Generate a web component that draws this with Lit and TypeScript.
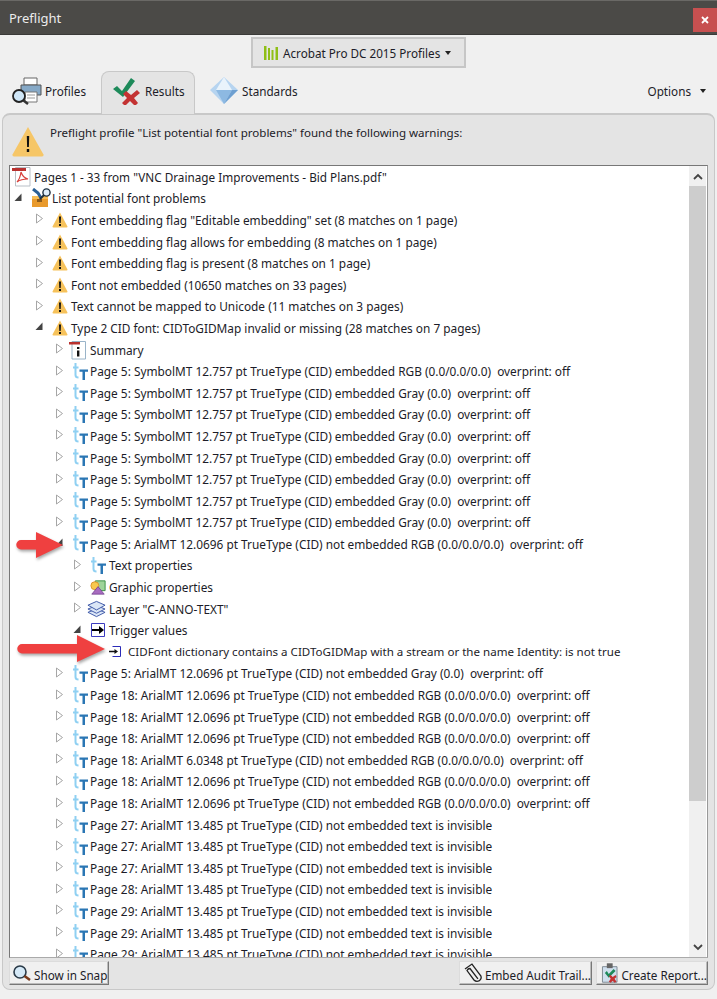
import { LitElement, html, css, svg } from "lit";
import { customElement } from "lit/decorators.js";

const tIcon = svg`<svg class="ic" width="16" height="17" viewBox="0 0 16 17"><path d="M3.500 0v12q0 2.500 3 2.500M1 4.500h5.500" fill="none" stroke="#8fd0f2" stroke-width="2"/><path d="M7.500 6.500h8.500v2.200h-3v8.300h-2.500V8.700h-3z" fill="#2a76b4"/></svg>`;
const warnSmall = svg`<svg class="ic" width="16" height="16" viewBox="0 0 16 16"><path d="M8 .5 15.500 14.600Q15.600 15.500 14.600 15.500H1.400Q.4 15.500.5 14.600Z" fill="#f6c25b"/><path d="M7 4.500h2l-.3 6.500H7.300zM7 12h2v2H7z" fill="#111"/></svg>`;
const pdfIcon = svg`<svg class="ic" width="20" height="21" viewBox="0 0 20 21"><path d="M3.500 1.500h14.500v18.500H3.500z" fill="#fff" stroke="#b9bfc6"/><path d="M0 2h14v3H0z" fill="#b8312f"/><path d="M12 4v1M9 6q-1 7-4 10q4-3 11-3q-5-1-7-7z" fill="none" stroke="#d8413c" stroke-width="1.200"/></svg>`;
const boxIcon = svg`<svg class="ic" width="20" height="20" viewBox="0 0 20 20"><path d="M1 8h16v11H1z" fill="#e99a2c"/><path d="M1 8h16v3H1z" fill="#f6bd55"/><path d="M6 11h5v3H6z" fill="#8a5a1a"/><path d="M2 1l5 4 3 5" fill="none" stroke="#2a5f95" stroke-width="3"/><circle cx="15.500" cy="4.500" r="3.600" fill="#dfeefa" stroke="#1e3040" stroke-width="1.400"/><path d="M13 7 9 11" stroke="#1e3040" stroke-width="2"/></svg>`;
const summaryIcon = svg`<svg class="ic shift" width="18" height="20" viewBox="0 0 18 20"><path d="M3 1.500h13.500v17.500H3z" fill="#fff" stroke="#9ab4c9"/><path d="M0 2h11v2.500H0z" fill="#b8312f"/><path d="M8 7h2.400v2H8zM8 10.500h2.400v6H8z" fill="#111"/></svg>`;
const graphicIcon = svg`<svg class="ic" width="16" height="17" viewBox="0 0 18 18"><path d="M6 1.500h11v11H6z" fill="#9fd49a" stroke="#2f8a3c"/><circle cx="5.500" cy="7" r="4.500" fill="#f7c94e" stroke="#d9902a"/><path d="M9 8 16 16.500H2z" fill="#a86cc0" stroke="#6d3a8a" stroke-width=".8"/></svg>`;
const layerIcon = svg`<svg class="ic shift" width="19" height="18" viewBox="0 0 20 18"><g fill="#dbe6f6" stroke="#3d57a6"><path d="M10 9 19 12.500 10 17 1 12.500Z"/><path d="M10 5.500 19 9 10 13.500 1 9Z"/><path d="M10 1 19 5 10 10 1 5Z"/></g></svg>`;
const triggerIcon = svg`<svg class="ic" width="16" height="16" viewBox="0 0 16 16"><path d="M1.500 1.500h13v13h-13z" fill="#fff" stroke="#3b3bc0"/><path d="M2 7h7V4l5 4-5 4V9H2z" fill="#000"/></svg>`;
const triggerSmall = svg`<svg class="ic" width="13" height="13" viewBox="0 0 13 13"><path d="M3.500 1.500h8v10h-8" fill="#fff" stroke="#2b2bb8"/><path d="M0 5.800h5.500V4l3.500 2.500L5.500 9V7.200H0z" fill="#111"/></svg>`;

type Row = { l: number; a?: "o" | "c"; i?: any; t: string };
const sym = (s: string): Row => ({ l: 3, a: "c", i: tIcon, t: `Page 5: SymbolMT 12.757 pt TrueType (CID) embedded ${s}  overprint: off` });
const ar = (p: number, s: string, c: string): Row => ({ l: 3, a: "c", i: tIcon, t: `Page ${p}: ArialMT ${s} pt TrueType (CID) not embedded ${c}` });
const RGB = "RGB (0.0/0.0/0.0)  overprint: off";
const rows: Row[] = [
  { l: 0, i: pdfIcon, t: 'Pages 1 - 33 from "VNC Drainage Improvements - Bid Plans.pdf"' },
  { l: 1, a: "o", i: boxIcon, t: "List potential font problems" },
  { l: 2, a: "c", i: warnSmall, t: 'Font embedding flag "Editable embedding" set (8 matches on 1 page)' },
  { l: 2, a: "c", i: warnSmall, t: "Font embedding flag allows for embedding (8 matches on 1 page)" },
  { l: 2, a: "c", i: warnSmall, t: "Font embedding flag is present (8 matches on 1 page)" },
  { l: 2, a: "c", i: warnSmall, t: "Font not embedded (10650 matches on 33 pages)" },
  { l: 2, a: "c", i: warnSmall, t: "Text cannot be mapped to Unicode (11 matches on 3 pages)" },
  { l: 2, a: "o", i: warnSmall, t: "Type 2 CID font: CIDToGIDMap invalid or missing (28 matches on 7 pages)" },
  { l: 3, a: "c", i: summaryIcon, t: "Summary" },
  sym("RGB (0.0/0.0/0.0)"),
  ...Array.from({ length: 7 }, () => sym("Gray (0.0)")),
  { ...ar(5, "12.0696", RGB), a: "o" },
  { l: 4, a: "c", i: tIcon, t: "Text properties" },
  { l: 4, a: "c", i: graphicIcon, t: "Graphic properties" },
  { l: 4, a: "c", i: layerIcon, t: 'Layer "C-ANNO-TEXT"' },
  { l: 4, a: "o", i: triggerIcon, t: "Trigger values" },
  { l: 5, i: triggerSmall, t: "CIDFont dictionary contains a CIDToGIDMap with a stream or the name Identity: is not true" },
  ar(5, "12.0696", "Gray (0.0)  overprint: off"),
  ar(18, "12.0696", RGB),
  ar(18, "12.0696", RGB),
  ar(18, "12.0696", RGB),
  ar(18, "6.0348", RGB),
  ar(18, "12.0696", RGB),
  ar(18, "12.0696", RGB),
  ...[27, 27, 27, 28, 29, 29, 29].map((p) => ar(p, "13.485", "text is invisible")),
];

const XS = [12, 31, 52, 72, 90, 109];
const WS = [20, 19, 17, 16, 17, 17];

@customElement("app-root")
export class AppRoot extends LitElement {
  static styles = css`
    :host { display: block; width: 717px; height: 999px; overflow: hidden; background: #f0f0f0; color: #1c1c28;
      font: 11.700px/16px "Noto Sans", "Open Sans", sans-serif; position: relative; }
    .title { height: 35px; box-sizing: border-box; background: #4b4a47; border-top: 1px solid #6a6966; border-bottom: 1px solid #3a3a38;
      display: flex; align-items: center; justify-content: space-between; color: #ececec; font-size: 13px; padding-left: 9px; }
    .close { width: 24px; height: 24px; margin-top: 4px; background: #c75050; display: flex; align-items: center; justify-content: center; }
    .top { height: 36px; display: flex; justify-content: center; align-items: flex-start; padding-top: 2px; box-sizing: border-box; }
    .profile { width: 215px; height: 31px; box-sizing: border-box; background: #e4e4e4; border: 2px solid #c6c6c6; padding-left: 11px;
      display: flex; align-items: center; gap: 4px; }
    .profile .caret { margin-left: 1px; }
    .caret { width: 0; height: 0; border: 3.500px solid transparent; border-top: 4px solid #222; border-bottom: 0; display: inline-block; }
    .tabs { height: 42px; display: flex; align-items: flex-start; padding-left: 11px; box-sizing: border-box; position: relative; z-index: 1; }
    .tab { display: flex; align-items: center; height: 43px; box-sizing: border-box; gap: 3px; padding-bottom: 4px; }
    .tab.profiles { width: 90px; }
    .tab.results { width: 94px; padding-left: 10px; background: #e4e4e4; border: 1px solid #c8c8c8; border-bottom: 0; border-radius: 8px 8px 0 0; }
    .tab.standards { margin-left: 15px; }
    .options { margin-left: auto; margin-right: 11px; height: 39px; display: flex; align-items: center; gap: 9px; }
    .panel { margin: 0 2px; height: 877px; box-sizing: border-box; background: #e4e4e4; border: 1px solid #c8c8c8; border-top-width: 2px; border-radius: 8px;
      padding: 0 6px; display: flex; flex-direction: column; }
    .msg { height: 50px; display: flex; align-items: flex-start; gap: 6px; padding-left: 3px; flex: none; }
    .msg svg { margin-top: 11px; }
    .msg span { margin-top: 10px; font-size: 11.550px; }
    .tree { height: 793px; flex: none; box-sizing: border-box; background: #fff; border: 1px solid #777; border-right-color: #999; border-bottom-color: #aaa; display: flex; overflow: hidden; }
    .list { flex: 1; min-width: 0; overflow: hidden; font-size: 11.850px; }
    .row { height: 21.600px; display: flex; align-items: center; white-space: pre; position: relative; }
    .row.l0 { font-size: 11.750px; }
    .row.l5 { font-size: 11.570px; }
    .arrow { width: 0; flex: none; position: relative; height: 10px; margin-top: -3px; }
    .arrow svg { position: absolute; top: 0; left: -17px; }
    .ic { flex: none; display: block; }
    .ic.shift { margin-left: -3px; }
    .slot { display: flex; align-items: center; flex: none; margin-right: 2px; }
    .bar { width: 17px; flex: none; margin-right: 1px; background: #f0f0f0; display: flex; flex-direction: column; }
    .bar .btn { height: 20px; display: flex; align-items: center; justify-content: center; flex: none; }
    .thumb { height: 615px; background: #cdcdcd; flex: none; }
    .grow { flex: 1; }
    .foot { height: 28px; flex: none; display: flex; align-items: flex-start; padding-top: 3px; gap: 4px; box-sizing: border-box; white-space: nowrap; }
    .fbtn { height: 24px; box-sizing: border-box; display: flex; align-items: center; gap: 2px; background: #f0f0f0; padding-left: 2px; overflow: hidden;
      border: 1px solid; border-color: #dcdcdc #777 #777 #dcdcdc; box-shadow: inset -1px -1px 0 #bbb; }
    .fbtn span { padding-top: 4px; }
    .fbtn.snap { width: 100px; }
    .fbtn.embed { width: 133px; padding-left: 3px; }
    .fbtn.report { width: 112px; padding-left: 4px; }
    .foot .sp { flex: 1; }
    .arrows { position: absolute; inset: 0; pointer-events: none; }
  `;

  row(r: Row) {
    return html`<div class="row l${r.l}" style="padding-left:${XS[r.l] - 10}px">
      ${r.a
        ? html`<span class="arrow"><svg width="9" height="11" viewBox="0 0 9 11">${r.a === "c"
            ? svg`<path d="M1.500 1 7.500 5.500 1.500 10Z" fill="#fff" stroke="#a6a6a6"/>`
            : svg`<path d="M7.500 1.500V9H.5Z" fill="#444"/>`}</svg></span>`
        : ""}
      <span class="slot" style="width:${WS[r.l]}px">${r.i}</span><span>${r.t}</span>
    </div>`;
  }

  render() {
    return html`
      <div class="title"><span>Preflight</span>
        <div class="close"><svg width="10" height="10" viewBox="0 0 10 10"><path d="M2 2l6 6M8 2l-6 6" stroke="#fff" stroke-width="1.800"/></svg></div>
      </div>
      <div class="top"><div class="profile">
        <svg width="15" height="15" viewBox="0 0 15 15"><path d="M0 1h2.500v14H0zM4 3h2v12H4zM7.500 5h2v10h-2zM11.500 2h2.500v13h-2.500z" fill="#8fbf16"/></svg>
        <span>Acrobat Pro DC 2015 Profiles</span><i class="caret"></i></div></div>
      <div class="tabs">
        <div class="tab profiles">
          <svg width="31" height="28" viewBox="0 0 31 28"><path d="M13 1h13v7H13z" fill="#fff" stroke="#666"/><path d="M10 8h20v10H10z" fill="#86a9c7" stroke="#555"/><path d="M14 15h12v10H14z" fill="#fff" stroke="#777"/><path d="M16 18h8M16 21h8" stroke="#999"/><circle cx="8" cy="19" r="6" fill="#cfe6f7" stroke="#222" stroke-width="1.800"/><path d="M12.500 23.500 17 27" stroke="#333" stroke-width="2.500"/></svg>
          <span>Profiles</span></div>
        <div class="tab results">
          <svg width="30" height="28" viewBox="0 0 30 28"><path d="M1 12l4-3 5 5L19 1l4 3-12 16z" fill="#1d8a5a"/><path d="M11 17l3-3 5 4 6-5 3 3-6 5 4 5-3 3-5-5-5 5-3-3 5-5z" fill="#c33232"/></svg>
          <span>Results</span></div>
        <div class="tab standards">
          <svg width="29" height="28" viewBox="0 0 29 28"><path d="M14 0 28 13 14 27 0 13Z" fill="#b6d4f0"/><path d="M14 0 22 13H6Z" fill="#e9f3fb"/><path d="M6 13H22L14 27Z" fill="#8db9e2"/><path d="M22 13H28L14 27Z" fill="#6e9fd0"/></svg>
          <span>Standards</span></div>
        <div class="options"><span>Options</span><i class="caret"></i></div>
      </div>
      <div class="panel">
        <div class="msg">
          <svg width="32" height="31" viewBox="0 0 32 31"><path d="M16 1 31.500 28.500Q32 30.500 30 30.500H2Q0 30.500.5 28.500Z" fill="#f6c667"/><path d="M14.800 10h2.400l-.3 11h-1.800zM14.800 23h2.400v3h-2.400z" fill="#111"/></svg>
          <span>Preflight profile "List potential font problems" found the following warnings:</span>
        </div>
        <div class="tree">
          <div class="list">${rows.map((r) => this.row(r))}</div>
          <div class="bar">
            <div class="btn"><svg width="10" height="7" viewBox="0 0 10 7"><path d="M1 6 5 2l4 4" fill="none" stroke="#444" stroke-width="1.800"/></svg></div>
            <div class="thumb"></div><div class="grow"></div>
            <div class="btn"><svg width="10" height="7" viewBox="0 0 10 7"><path d="M1 1l4 4 4-4" fill="none" stroke="#444" stroke-width="1.800"/></svg></div>
          </div>
        </div>
        <div class="foot">
          <div class="fbtn snap"><svg width="20" height="17" viewBox="0 0 20 17"><circle cx="8" cy="7" r="6" fill="#d5e9f7" stroke="#2a3a48" stroke-width="1.600"/><path d="M12.500 11 18 15" stroke="#7a3a1c" stroke-width="2.600"/></svg><span>Show in Snap</span></div>
          <div class="sp"></div>
          <div class="fbtn embed"><svg width="20" height="20" viewBox="0 0 20 20"><path d="M2 6 9 1l9 12q1 3-2 5-3 1-5-1L4 7.500q1-2 3-2l8 10.500" fill="none" stroke="#222" stroke-width="1.300"/></svg><span>Embed Audit Trail...</span></div>
          <div class="fbtn report"><svg width="19" height="20" viewBox="0 0 19 20"><path d="M1.500 3.500h15v16h-15z" fill="#cfdfee" stroke="#7f8a94"/><path d="M6 0h6v5H6z" fill="#666"/><path d="M4 10l2-2 2 3 5-5 2 2-7 7z" fill="#1d8a5a"/><path d="M8 13l2-1 2 2 3-2 1 2-2 2 2 3-2 1-2-2-2 2-2-1 2-3z" fill="#c33232"/></svg><span>Create Report...</span></div>
        </div>
      </div>
      <svg class="arrows" width="717" height="999" viewBox="0 0 717 999">
        <g fill="#ef4040" style="filter:drop-shadow(1px 2px 1.500px rgba(0,0,0,.35))">
          <path d="M21 540H36V532L63 545 36 558V549.500H21a4.700 4.700 0 0 1 0-9.500Z"/>
          <path d="M22 644H77V635L105 649 77 662V653.500H22a4.700 4.700 0 0 1 0-9.500Z"/>
        </g>
      </svg>`;
  }
}
